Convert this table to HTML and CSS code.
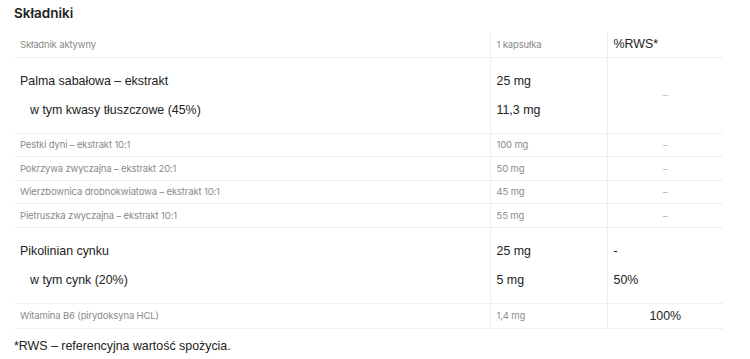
FILE: index.html
```html
<!DOCTYPE html>
<html lang="pl">
<head>
<meta charset="UTF-8" />
<meta name="viewport" content="width=device-width,initial-scale=1" />
<title>Składniki</title>
<link rel="stylesheet" href="styles.css">
</head>
<body>
<section class="ingredients">
  <h3>Składniki</h3>

  <table class="facts">
    <colgroup>
      <col class="c-name"><col class="c-dose"><col class="c-rws">
    </colgroup>
    <thead>
      <tr class="small head">
        <th>Składnik aktywny</th>
        <th>1 kapsułka</th>
        <th class="big">%RWS*</th>
      </tr>
    </thead>
    <tbody>
      <!-- palma -->
      <tr class="group">
        <td><p>Palma sabałowa – ekstrakt</p><p class="sub">w tym kwasy tłuszczowe (45%)</p></td>
        <td><p>25 mg</p><p>11,3 mg</p></td>
        <td class="mid dash">–</td>
      </tr>
      <tr class="small"><td>Pestki dyni – ekstrakt 10:1</td><td>100 mg</td><td class="mid dash">–</td></tr>
      <tr class="small"><td>Pokrzywa zwyczajna – ekstrakt 20:1</td><td>50 mg</td><td class="mid dash">–</td></tr>
      <tr class="small"><td>Wierzbownica drobnokwiatowa – ekstrakt 10:1</td><td>45 mg</td><td class="mid dash">–</td></tr>
      <tr class="small"><td>Pietruszka zwyczajna – ekstrakt 10:1</td><td>55 mg</td><td class="mid dash">–</td></tr>

      <!-- cynk -->
      <tr class="group">
        <td><p>Pikolinian cynku</p><p class="sub">w tym cynk (20%)</p></td>
        <td><p>25 mg</p><p>5 mg</p></td>
        <td><p>-</p><p>50%</p></td>
      </tr>
      <tr class="small last"><td>Witamina B6 (pirydoksyna HCL)</td><td>1,4 mg</td><td class="mid big">100%</td></tr>
    </tbody>
  </table>

  <p class="note">*RWS – referencyjna wartość spożycia.</p>
</section>
</body>
</html>
```

FILE: styles.css
```css
:root{
  --ink:#222; --muted:#8a8a8a; --line:#efefef;
}
*{box-sizing:border-box;margin:0;padding:0}

body{
  background:#fff;
  color:var(--ink);
  font-family:"Liberation Sans",Arial,sans-serif;
  padding:0 14px;
}
.ingredients h3{
  font-family:Inter,sans-serif;
  font-weight:600;
  font-size:13.5px;
  line-height:20px;
  padding-top:3px;
  margin-bottom:9px;
}

.facts{
  width:709px;
  border-collapse:collapse;
  table-layout:fixed;
}
.c-name{width:476px}
.c-dose{width:117px}
.c-rws{width:116px}

.facts th,.facts td{
  text-align:left;
  font-weight:400;
  vertical-align:middle;
  padding:0 6px;
  border-bottom:1px solid var(--line);
}
.facts th + th,.facts td + td{border-left:1px solid var(--line)}

/* small gray rows */
.small th,.small td{
  font-family:Inter,sans-serif;
  font-size:9.5px;
  color:var(--muted);
  height:23.5px;
  letter-spacing:-.15px;
}
.head th{height:25px}
.last td{height:25px}
.small .big,.head .big{
  font-family:"Liberation Sans",Arial,sans-serif;
  font-size:12.4px;
  color:var(--ink);
  letter-spacing:0;
}

/* two-line groups */
.group td{
  font-size:12.4px;
  padding-top:14px;
  padding-bottom:14px;
}
.group p{line-height:18px}
.group p + p{margin-top:11px}
.group .sub{padding-left:10px}

.mid{text-align:center !important}
.dash{color:#aaa !important;font-size:9px !important}

.note{
  font-size:12.4px;
  margin-top:9px;
  line-height:16px;
}
```
